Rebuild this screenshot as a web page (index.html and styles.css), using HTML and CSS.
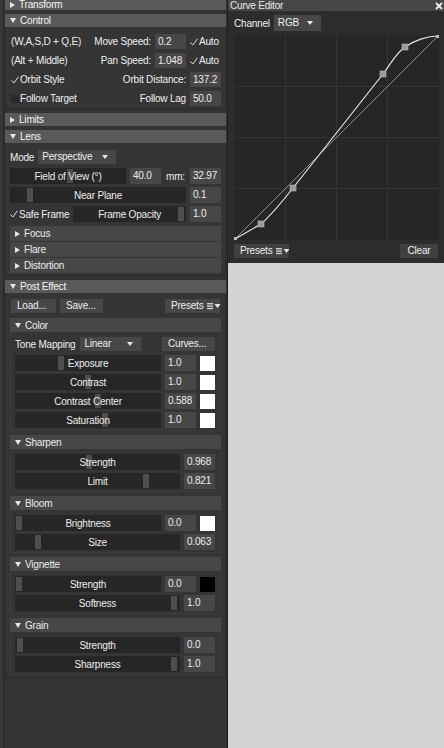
FILE: index.html
```html
<!DOCTYPE html>
<html>
<head>
<meta charset="utf-8">
<link rel="stylesheet" href="styles.css">
</head>
<body>
<div class="app">
  <div class="left">
    <section class="sec first">
      <div class="hdr"><i class="tri-r"></i>Transform</div>
    </section>

    <section class="sec">
      <div class="hdr"><i class="tri-d"></i>Control</div>
      <div class="body control">
        <div class="row">
          <span class="lbl">(W,A,S,D + Q,E)</span>
          <span class="rlbl">Move Speed:</span>
          <span class="inp">0.2</span>
          <span class="chk"><svg class="ck" width="8" height="8" viewBox="0 0 8 8"><polyline points="0.5,4.5 2.8,7 7.5,0.8" fill="none" stroke="#e0e0e0" stroke-width="1"/></svg>Auto</span>
        </div>
        <div class="row">
          <span class="lbl">(Alt + Middle)</span>
          <span class="rlbl">Pan Speed:</span>
          <span class="inp">1.048</span>
          <span class="chk"><svg class="ck" width="8" height="8" viewBox="0 0 8 8"><polyline points="0.5,4.5 2.8,7 7.5,0.8" fill="none" stroke="#e0e0e0" stroke-width="1"/></svg>Auto</span>
        </div>
        <div class="row">
          <span class="lbl"><svg class="ck" width="8" height="8" viewBox="0 0 8 8"><polyline points="0.5,4.5 2.8,7 7.5,0.8" fill="none" stroke="#e0e0e0" stroke-width="1"/></svg>Orbit Style</span>
          <span class="rlbl">Orbit Distance:</span>
          <span class="inp">137.2</span>
        </div>
        <div class="row">
          <span class="lbl"><i class="box"></i>Follow Target</span>
          <span class="rlbl">Follow Lag</span>
          <span class="inp">50.0</span>
        </div>
      </div>
    </section>

    <section class="sec">
      <div class="hdr"><i class="tri-r"></i>Limits</div>
    </section>

    <section class="sec">
      <div class="hdr"><i class="tri-d"></i>Lens</div>
      <div class="body lens">
        <div class="row r14">
          <span class="mode">Mode</span>
          <span class="dd w78">Perspective<i class="dtri"></i></span>
        </div>
        <div class="row r16">
          <div class="sl fov" style="--v:.52"><i class="h"></i><span>Field of View (°)</span></div>
          <span class="inp">40.0</span>
          <span class="mm">mm:</span>
          <span class="inp">32.97</span>
        </div>
        <div class="row r16">
          <div class="sl" style="--v:.10"><i class="h"></i><span>Near Plane</span></div>
          <span class="inp">0.1</span>
        </div>
        <div class="row r16">
          <span class="lbl0"><svg class="ck" width="8" height="8" viewBox="0 0 8 8"><polyline points="0.5,4.5 2.8,7 7.5,0.8" fill="none" stroke="#e0e0e0" stroke-width="1"/></svg>Safe Frame</span>
          <div class="sl" style="--v:.99"><i class="h"></i><span>Frame Opacity</span></div>
          <span class="inp">1.0</span>
        </div>
        <div class="subs">
          <div class="shdr"><i class="tri-r"></i>Focus</div>
          <div class="shdr"><i class="tri-r"></i>Flare</div>
          <div class="shdr"><i class="tri-r"></i>Distortion</div>
        </div>
      </div>
    </section>

    <section class="sec">
      <div class="hdr"><i class="tri-d"></i>Post Effect</div>
      <div class="body post">
        <div class="btnrow">
          <span class="btn load">Load...</span>
          <span class="btn save">Save...</span>
          <span class="btn presets">Presets <svg class="picon" width="14" height="8" viewBox="0 0 14 8"><rect x="0" y="1" width="6" height="1.4" fill="#cfcfcf"/><rect x="0" y="3.4" width="6" height="1.4" fill="#cfcfcf"/><rect x="0" y="5.8" width="6" height="1.4" fill="#cfcfcf"/><polygon points="7.5,2 13.5,2 10.5,6" fill="#e6e6e6"/></svg></span>
        </div>

        <div class="sub">
          <div class="shdr"><i class="tri-d"></i>Color</div>
          <div class="sbody">
            <div class="row r14">
              <span class="tm">Tone Mapping</span>
              <span class="dd w61">Linear<i class="dtri"></i></span>
              <span class="btn curves">Curves...</span>
            </div>
            <div class="row r16">
              <div class="sl" style="--v:.31"><i class="h"></i><span>Exposure</span></div>
              <span class="inp">1.0</span><span class="sw white"></span>
            </div>
            <div class="row r16">
              <div class="sl" style="--v:.50"><i class="h"></i><span>Contrast</span></div>
              <span class="inp">1.0</span><span class="sw white"></span>
            </div>
            <div class="row r16">
              <div class="sl" style="--v:.575"><i class="h"></i><span>Contrast Center</span></div>
              <span class="inp">0.588</span><span class="sw white"></span>
            </div>
            <div class="row r16">
              <div class="sl" style="--v:.625"><i class="h"></i><span>Saturation</span></div>
              <span class="inp">1.0</span><span class="sw white"></span>
            </div>
          </div>
        </div>

        <div class="sub">
          <div class="shdr"><i class="tri-d"></i>Sharpen</div>
          <div class="sbody">
            <div class="row r16">
              <div class="sl" style="--v:.45"><i class="h"></i><span>Strength</span></div>
              <span class="inp">0.968</span>
            </div>
            <div class="row r16">
              <div class="sl" style="--v:.81"><i class="h"></i><span>Limit</span></div>
              <span class="inp">0.821</span>
            </div>
          </div>
        </div>

        <div class="sub">
          <div class="shdr"><i class="tri-d"></i>Bloom</div>
          <div class="sbody">
            <div class="row r16">
              <div class="sl" style="--v:.01"><i class="h"></i><span>Brightness</span></div>
              <span class="inp">0.0</span><span class="sw white"></span>
            </div>
            <div class="row r16">
              <div class="sl" style="--v:.125"><i class="h"></i><span>Size</span></div>
              <span class="inp">0.063</span>
            </div>
          </div>
        </div>

        <div class="sub">
          <div class="shdr"><i class="tri-d"></i>Vignette</div>
          <div class="sbody">
            <div class="row r16">
              <div class="sl" style="--v:.01"><i class="h"></i><span>Strength</span></div>
              <span class="inp">0.0</span><span class="sw black"></span>
            </div>
            <div class="row r16">
              <div class="sl" style="--v:.99"><i class="h"></i><span>Softness</span></div>
              <span class="inp">1.0</span>
            </div>
          </div>
        </div>

        <div class="sub">
          <div class="shdr"><i class="tri-d"></i>Grain</div>
          <div class="sbody">
            <div class="row r16">
              <div class="sl" style="--v:.01"><i class="h"></i><span>Strength</span></div>
              <span class="inp">0.0</span>
            </div>
            <div class="row r16">
              <div class="sl" style="--v:.99"><i class="h"></i><span>Sharpness</span></div>
              <span class="inp">1.0</span>
            </div>
          </div>
        </div>
      </div>
    </section>
  </div>

  <div class="right">
    <div class="curve">
      <div class="ctitle">
        <span>Curve Editor</span>
        <svg class="close" width="8" height="8" viewBox="0 0 8 8"><path d="M1,1 L7,7 M7,1 L1,7" stroke="#f0f0f0" stroke-width="1.8"/></svg>
      </div>
      <div class="chan">
        <span>Channel</span>
        <span class="dd w48">RGB<i class="dtri"></i></span>
      </div>
      <svg class="graph" width="205" height="205" viewBox="0 0 205 205">
        <rect x="0" y="0" width="205" height="205" fill="#262626"/>
        <g stroke="#343434" stroke-width="1">
          <line x1="51.5" y1="0" x2="51.5" y2="205"/>
          <line x1="102.5" y1="0" x2="102.5" y2="205"/>
          <line x1="153.5" y1="0" x2="153.5" y2="205"/>
          <line x1="0" y1="51.5" x2="205" y2="51.5"/>
          <line x1="0" y1="102.5" x2="205" y2="102.5"/>
          <line x1="0" y1="153.5" x2="205" y2="153.5"/>
        </g>
        <line x1="1" y1="204" x2="204" y2="1" stroke="#8c8c8c" stroke-width="1"/>
        <path d="M1,204 L27,189 C37,180.5 52.8,160.8 59,153 L149,39 C156.4,29.6 161.2,18.8 171,12 C180,5.7 193,1 204,1" fill="none" stroke="#e6e6e6" stroke-width="1.2"/>
        <g fill="#9c9c9c" stroke="#b8b8b8" stroke-width="0.6">
          <rect x="24" y="186" width="6" height="6"/>
          <rect x="56" y="150" width="6" height="6"/>
          <rect x="146" y="36" width="6" height="6"/>
          <rect x="168" y="9" width="6" height="6"/>
        </g>
        <rect x="0" y="202" width="3" height="3" fill="#bbb"/>
        <rect x="202" y="0" width="3" height="3" fill="#bbb"/>
      </svg>
      <div class="cbtns">
        <span class="btn cpre">Presets <svg class="picon" width="14" height="8" viewBox="0 0 14 8"><rect x="0" y="1" width="6" height="1.4" fill="#cfcfcf"/><rect x="0" y="3.4" width="6" height="1.4" fill="#cfcfcf"/><rect x="0" y="5.8" width="6" height="1.4" fill="#cfcfcf"/><polygon points="7.5,2 13.5,2 10.5,6" fill="#e6e6e6"/></svg></span>
        <span class="btn clear">Clear</span>
      </div>
    </div>
  </div>
</div>
</body>
</html>
```

FILE: styles.css
```css
* { box-sizing: border-box; }

body {
  margin: 0;
  background: #d4d4d4;
  font-family: "Liberation Sans", Arial, sans-serif;
  font-size: 10px;
  letter-spacing: -0.2px;
  color: #eeeeee;
}

.app {
  display: flex;
  width: 444px;
  height: 748px;
  overflow: hidden;
}

/* ---------- left inspector ---------- */
.left {
  width: 228px;
  height: 748px;
  flex: none;
  padding: 0 1px 0 5px;
  border-right: 1px solid #1e1e1e;
  background: linear-gradient(to right, #383838 0 3px, #262626 3px 4px, #333333 4px);
}

.sec { margin-bottom: 4px; }
.sec.first { margin-top: -3px; }
.sec.first .hdr { padding-top: 2px; }

.hdr {
  height: 13px;
  background: #5a5a5a;
  padding-left: 5px;
  display: flex;
  align-items: center;
  gap: 4px;
  color: #f4f4f4;
}

.tri-r {
  width: 0; height: 0;
  border-left: 5px solid #e6e6e6;
  border-top: 3.5px solid transparent;
  border-bottom: 3.5px solid transparent;
}
.tri-d {
  width: 0; height: 0;
  border-top: 5px solid #e6e6e6;
  border-left: 3.5px solid transparent;
  border-right: 3.5px solid transparent;
}

.body {
  background: #353535;
  border: 1px solid #2a2a2a;
  border-top: 0;
  padding: 7px 4px 2px 4px;
  display: flex;
  flex-direction: column;
}

.row {
  display: flex;
  align-items: center;
  gap: 4px;
  height: 15px;
}
.r14 { height: 14px; }
.r16 { height: 16px; }

.control { gap: 4px; }
.control .lbl {
  flex: 1;
  padding-left: 1px;
  display: flex;
  align-items: center;
  white-space: nowrap;
}
.rlbl { white-space: nowrap; }
.ck { flex: none; margin-right: 1px; }
.chk {
  width: 31px;
  display: flex;
  align-items: center;
}
.box {
  width: 8px; height: 8px;
  background: #292929;
  margin-right: 1px;
}

.inp {
  flex: none;
  width: 31px;
  height: 15px;
  line-height: 15px;
  background: #474747;
  padding-left: 3px;
  color: #ececec;
  white-space: nowrap;
}
.r16 .inp { height: 16px; line-height: 16px; }

.dd {
  position: relative;
  height: 14px;
  line-height: 14px;
  background: #474747;
  padding-left: 4px;
}
.w78 { width: 78px; }
.w61 { width: 61px; }
.w48 { width: 47px; }
.dtri {
  position: absolute;
  right: 8px;
  top: 5px;
  width: 0; height: 0;
  border-top: 4px solid #e6e6e6;
  border-left: 3px solid transparent;
  border-right: 3px solid transparent;
}

.sl {
  position: relative;
  flex: 1;
  height: 16px;
  background: #262626;
  display: flex;
  align-items: center;
  justify-content: center;
  min-width: 0;
}
.sl.fov { flex: none; width: 116px; }
.sl .h {
  position: absolute;
  top: 1px;
  bottom: 1px;
  width: 6px;
  left: calc((100% - 7px) * var(--v));
  background: #4e4e4e;
}
.sl span { position: relative; white-space: nowrap; color: #ececec; }

.lens { gap: 3px; }
.lens .r14 { margin-bottom: 1px; }
.mode { padding-left: 0; }
.mm { flex: 1; text-align: center; }
.lbl0 { display: flex; align-items: center; white-space: nowrap; }

.subs {
  margin-top: 1px;
  display: flex;
  flex-direction: column;
  gap: 1px;
}
.shdr {
  height: 15px;
  background: #474747;
  display: flex;
  align-items: center;
  gap: 4px;
  padding-left: 5px;
  color: #ececec;
}
.sub .shdr { height: 14px; }

/* post effect */
.post { padding: 6px 4px 2px 4px; gap: 4px; }
.btnrow {
  display: flex;
  height: 14px;
  gap: 4px;
  padding-left: 1px;
  margin-bottom: 1px;
}
.btn {
  height: 14px;
  line-height: 14px;
  background: #474747;
  padding: 0 6px;
  white-space: nowrap;
  display: inline-flex;
  align-items: center;
  gap: 3px;
}
.load { width: 45px; }
.save { width: 43px; }
.presets { margin-left: auto; width: 55px; margin-right: 1px; }
.picon { flex: none; }

.sbody {
  border: 1px solid #3c3c3c;
  border-top: 0;
  padding: 5px 5px 2px 4px;
  display: flex;
  flex-direction: column;
  gap: 3px;
}
.sbody .r14 { margin-bottom: 1px; }
.tm { white-space: nowrap; margin-right: 1px; }
.curves { margin-left: auto; width: 53px; }

.sw {
  flex: none;
  width: 15px;
  height: 15px;
}
.sw.white { background: #ffffff; }
.sw.black { background: #000000; }

/* ---------- right: curve editor ---------- */
.right {
  width: 216px;
  flex: none;
}
.curve {
  height: 263px;
  background: #2c2c2c;
  display: flex;
  flex-direction: column;
}
.ctitle {
  margin-top: -3px;
  height: 14px;
  background: #474747;
  display: flex;
  align-items: center;
  justify-content: space-between;
  padding: 3px 1px 0 2px;
  color: #ececec;
}
.chan {
  margin-top: 4px;
  height: 16px;
  display: flex;
  align-items: center;
  gap: 4px;
  padding-left: 6px;
}
.chan .dd { height: 16px; line-height: 16px; }
.chan .dtri { top: 6px; }
.graph {
  display: block;
  margin: 4px 0 0 6px;
}
.cbtns {
  margin-top: 4px;
  display: flex;
  justify-content: space-between;
  padding: 0 6px;
}
.cpre { width: 55px; background: #404040; }
.clear { width: 38px; background: #404040; justify-content: center; }
```
